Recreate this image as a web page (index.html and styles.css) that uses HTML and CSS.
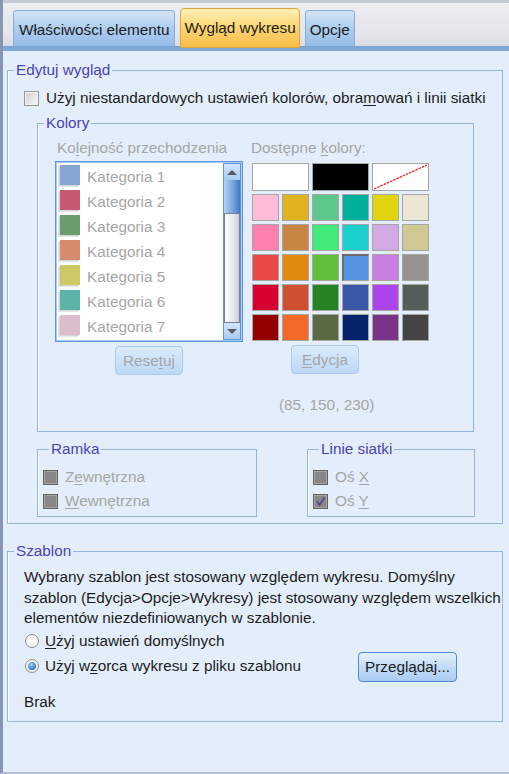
FILE: index.html
```html
<!DOCTYPE html>
<html lang="pl">
<head>
<meta charset="utf-8">
<title>Wygląd wykresu</title>
<link rel="stylesheet" href="styles.css">
</head>
<body>
<div class="window">
  <div class="tabbar">
    <div class="tab">Właściwości elementu</div>
    <div class="tab active">Wygląd wykresu</div>
    <div class="tab last">Opcje</div>
  </div>
  <div class="strip"></div>

  <fieldset class="group edit">
    <legend>Edytuj wygląd</legend>
    <div class="check-row main-check"><span class="cb"></span><span>Użyj niestandardowych ustawień kolorów, obra<u>m</u>owań i linii siatki</span></div>

    <fieldset class="group colors">
      <legend>Kolory</legend>
      <div class="colors-body">
        <div class="col-left">
          <div class="lbl">Ko<u>l</u>ejność przechodzenia</div>
          <div class="listbox">
            <div class="items">
              <div class="item"><span class="sw" style="background:#86a6d2"></span><span>Kategoria 1</span></div>
              <div class="item"><span class="sw" style="background:#c65a72"></span><span>Kategoria 2</span></div>
              <div class="item"><span class="sw" style="background:#6a9c6c"></span><span>Kategoria 3</span></div>
              <div class="item"><span class="sw" style="background:#d78a6c"></span><span>Kategoria 4</span></div>
              <div class="item"><span class="sw" style="background:#cfc866"></span><span>Kategoria 5</span></div>
              <div class="item"><span class="sw" style="background:#5cb4a8"></span><span>Kategoria 6</span></div>
              <div class="item"><span class="sw" style="background:#dbbccb"></span><span>Kategoria 7</span></div>
              <div class="item"><span class="sw" style="background:#c48ed6"></span><span>Kategoria 8</span></div>
            </div>
            <div class="scrollbar">
              <div class="sb-btn"><span class="arrow up"></span></div>
              <div class="sb-thumb"></div>
              <div class="sb-track"></div>
              <div class="sb-btn"><span class="arrow down"></span></div>
            </div>
          </div>
          <div class="btn disabled reset"><span>Rese<u>t</u>uj</span></div>
        </div>
        <div class="col-right">
          <div class="lbl">Dostępne <u>k</u>olory:</div>
          <div class="palette">
            <span class="cell wide" style="background:#ffffff"></span>
            <span class="cell wide" style="background:#000000"></span>
            <span class="cell wide none"><svg viewBox="0 0 55 26" preserveAspectRatio="none"><line x1="1" y1="25" x2="54" y2="1" stroke="#f01c1c" stroke-width="1.3" stroke-dasharray="2.5 1"/></svg></span>

            <span class="cell" style="background:#ffbcd9"></span>
            <span class="cell" style="background:#e0b420"></span>
            <span class="cell" style="background:#5ec88a"></span>
            <span class="cell" style="background:#00b09a"></span>
            <span class="cell" style="background:#e2d40e"></span>
            <span class="cell" style="background:#ece6d4"></span>

            <span class="cell" style="background:#ff7fae"></span>
            <span class="cell" style="background:#c98642"></span>
            <span class="cell" style="background:#41e87a"></span>
            <span class="cell" style="background:#1ccfcf"></span>
            <span class="cell" style="background:#d1a9e4"></span>
            <span class="cell" style="background:#d1c994"></span>

            <span class="cell" style="background:#e84a4a"></span>
            <span class="cell" style="background:#e08a10"></span>
            <span class="cell" style="background:#5ec03a"></span>
            <span class="cell selected" style="background:#5594e2"></span>
            <span class="cell" style="background:#c97fe2"></span>
            <span class="cell" style="background:#959290"></span>

            <span class="cell" style="background:#d60030"></span>
            <span class="cell" style="background:#cf5030"></span>
            <span class="cell" style="background:#258325"></span>
            <span class="cell" style="background:#3b58a8"></span>
            <span class="cell" style="background:#ad44ee"></span>
            <span class="cell" style="background:#555f5a"></span>

            <span class="cell" style="background:#930000"></span>
            <span class="cell" style="background:#f26a28"></span>
            <span class="cell" style="background:#5a6b44"></span>
            <span class="cell" style="background:#06246c"></span>
            <span class="cell" style="background:#79348a"></span>
            <span class="cell" style="background:#444444"></span>
          </div>
          <div class="btn disabled edit-btn"><span><u>E</u>dycja</span></div>
          <div class="rgb">(85, 150, 230)</div>
        </div>
      </div>
    </fieldset>

    <div class="subgroups">
      <fieldset class="group frame">
        <legend>Ramka</legend>
        <div class="check-row dis"><span class="cb disabled"></span><span>Z<u>e</u>wnętrzna</span></div>
        <div class="check-row dis"><span class="cb disabled"></span><span><u>W</u>ewnętrzna</span></div>
      </fieldset>
      <fieldset class="group gridlines">
        <legend>Linie siatki</legend>
        <div class="check-row dis"><span class="cb disabled"></span><span>Oś <u>X</u></span></div>
        <div class="check-row dis"><span class="cb disabled"><svg viewBox="0 0 15 15"><polyline points="3.5,7.5 6.5,11.5 12,3" fill="none" stroke="#4b4b8c" stroke-width="2"/></svg></span><span>Oś <u>Y</u></span></div>
      </fieldset>
    </div>
  </fieldset>

  <fieldset class="group template">
    <legend>Szablon</legend>
    <p class="desc">Wybrany szablon jest stosowany względem wykresu. Domyślny<br>szablon (Edycja&gt;Opcje&gt;Wykresy) jest stosowany względem wszelkich<br>elementów niezdefiniowanych w szablonie.</p>
    <div class="radios">
      <div class="radio-row"><span class="rb"></span><span><u>U</u>żyj ustawień domyślnych</span></div>
      <div class="radio-row"><span class="rb on"></span><span>Użyj w<u>z</u>orca wykresu z pliku szablonu</span><div class="btn browse"><span>Przeglądaj...</span></div></div>
    </div>
    <div class="brak">Brak</div>
  </fieldset>
</div>
</body>
</html>
```

FILE: styles.css
```css
* { box-sizing: border-box; }
html, body { margin: 0; padding: 0; }
body {
  background: #e3eefa;
  font-family: "Liberation Sans", Arial, sans-serif;
  font-size: 15.3px;
  color: #1c1c1c;
}
u { text-decoration: underline; text-underline-offset: 2px; }

.window {
  position: relative;
  width: 509px;
  height: 774px;
  background: #e3eefa;
  border-left: 3px solid #8796b3;
  border-bottom: 2px solid #b3c0d6;
  overflow: hidden;
}
.window::before {
  content: "";
  position: absolute;
  left: -3px;
  top: 378px;
  width: 3px;
  height: 20px;
  background: repeating-linear-gradient(#3f4f70 0 2px, #8796b3 2px 5px);
}

/* tabs */
.tabbar {
  height: 46px;
  display: flex;
  align-items: flex-end;
  gap: 4px;
  padding-left: 10px;
  background: linear-gradient(#c6c9d3 0, #c6c9d3 3px, #ececf1 3px, #e4e5eb 80%, #d9dae3 100%);
}
.tab {
  height: 36px;
  padding: 3px 5px 0;
  display: flex;
  align-items: center;
  border: 1px solid #86acd9;
  border-bottom: none;
  border-radius: 4px 4px 0 0;
  background: linear-gradient(#d3e4f6, #b4d1f1 40%, #95bce8);
  white-space: nowrap;
}
.tab.last { padding: 3px 4px 0; }
.tab.active {
  height: 40px;
  margin-left: 1px;
  margin-bottom: -2px;
  padding: 0 3px;
  margin-right: 1px;
  position: relative;
  z-index: 1;
  border: 1px solid #d9a640;
  background: linear-gradient(#fff0b5, #fdd877 45%, #f8bd48);
}
.strip { height: 5px; background: #7ba6d6; }

/* groups */
.group {
  margin: 0;
  padding: 0;
  border: 1px solid #94b5de;
  box-shadow: inset 1px 0 0 #fbfdff;
  min-width: 0;
}
.group > legend {
  margin-left: 6px;
  padding: 0 2px;
  line-height: 16px;
  color: #4a44b6;
}

.edit { margin: 11px 6px 0 4px; padding-bottom: 6px; }

.check-row { display: flex; align-items: center; gap: 7px; white-space: nowrap; }
.main-check { margin: 12px 0 0 16px; height: 16px; }
.cb {
  width: 15px;
  height: 15px;
  flex: none;
  border: 1px solid #979797;
  background: linear-gradient(135deg, #d2d2d2, #f6f6f6);
  box-shadow: inset 0 0 0 1px #f2f2f2;
}
.cb.disabled {
  border: 1px solid #636363;
  background: #878787;
  box-shadow: inset 0 0 0 1px #a5a5a5;
}
.cb svg { display: block; width: 13px; height: 13px; }

.colors { margin: 9px 0 0 29px; width: 437px; padding-bottom: 18px; }
.colors-body { display: flex; }
.lbl { margin-top: 9px; line-height: 16px; color: #a6a6a6; white-space: nowrap; }
.col-left { margin-left: 17px; width: 188px; display: flex; flex-direction: column; }
.col-left .lbl { padding-left: 2px; }
.col-right { margin-left: 8px; display: flex; flex-direction: column; align-items: flex-start; }

.listbox {
  margin-top: 5px;
  height: 181px;
  display: flex;
  border: 1px solid #5d98dc;
  box-shadow: inset 0 0 0 1px #a8cbf2;
  background: #fff;
  padding: 1px;
}
.items { flex: 1; overflow: hidden; }
.item {
  height: 25px;
  display: flex;
  align-items: flex-start;
  color: #a6a6a6;
  white-space: nowrap;
}
.sw {
  width: 20px;
  height: 20px;
  margin: 2px 7px 0 3px;
  flex: none;
  box-shadow: -1px 1px 0 #d6d6d6, -2px 2px 0 #e6e6e6;
}
.item span:last-child { line-height: 16px; padding-top: 6px; }

.scrollbar {
  width: 18px;
  display: flex;
  flex-direction: column;
  border: 1px solid #5d98dc;
  background: #bcd9f7;
}
.sb-btn {
  height: 16px;
  display: flex;
  align-items: center;
  justify-content: center;
  background: linear-gradient(#d2e6fa, #a9cdf3);
}
.arrow { width: 0; height: 0; border-left: 5px solid transparent; border-right: 5px solid transparent; }
.arrow.up { border-bottom: 5px solid #5a5a66; }
.arrow.down { border-top: 5px solid #5a5a66; }
.sb-thumb {
  height: 33px;
  background: linear-gradient(90deg, #b7d4f3, #6fa1dc 60%, #3e78c4);
}
.sb-track {
  flex: 1;
  border: 1px solid #7b7f94;
  background: linear-gradient(90deg, #ffffff, #e6e8f0 60%, #c9ccd8);
}

.btn {
  display: flex;
  align-items: center;
  justify-content: center;
  line-height: 18px;
  height: 29px;
  border-radius: 4px;
  white-space: nowrap;
}
.btn.disabled {
  width: 68px;
  margin-top: 4px;
  color: #a6a6a6;
  border: 1px solid #a9cbef;
  background: linear-gradient(#dcebfb, #bcd8f6);
}
.reset { align-self: center; }
.edit-btn { margin-left: 40px; }

.palette {
  margin-top: 7px;
  margin-left: 1px;
  display: grid;
  grid-template-columns: repeat(6, 27px);
  grid-template-rows: 28px repeat(5, 27px);
  gap: 3px;
}
.cell { display: block; border: 1px solid #a6a6a6; }
.cell.wide { grid-column: span 2; }
.cell.none { background: #fff; }
.cell.none svg { display: block; width: 100%; height: 100%; }
.cell.selected { border-top: 2px solid #6b6b6b; border-left: 2px solid #6b6b6b; }

.rgb { margin: 23px 0 0 28px; line-height: 16px; color: #a6a6a6; }

.subgroups { display: flex; margin-top: 9px; }
.frame { margin-left: 29px; width: 220px; padding: 8px 0 3px 5px; }
.gridlines { margin-left: 50px; width: 168px; padding: 8px 0 3px 5px; }
.check-row.dis { height: 24px; color: #a6a6a6; }

.template { margin: 19px 6px 0 4px; padding-bottom: 11px; }
.desc { margin: 8px 0 0 16px; line-height: 20.6px; white-space: nowrap; }
.radios { margin-top: 0; }
.radio-row {
  height: 25px;
  display: flex;
  align-items: center;
  gap: 6px;
  margin-left: 17px;
  white-space: nowrap;
}
.rb {
  width: 14px;
  height: 14px;
  flex: none;
  border-radius: 50%;
  border: 1px solid #8b8b8b;
  background: radial-gradient(circle at 50% 40%, #ffffff 40%, #dedede);
  display: flex;
  align-items: center;
  justify-content: center;
}
.rb.on::after {
  content: "";
  width: 8px;
  height: 8px;
  border-radius: 50%;
  background: radial-gradient(circle at 40% 35%, #a9cdf6, #2f6ec6 75%);
}
.browse {
  margin: 2px 45px 0 auto;
  width: 99px;
  height: 30px;
  flex: none;
  color: #1c1c1c;
  border: 1px solid #4f8ad2;
  background: linear-gradient(#e4f0fc, #c4dcf6 50%, #a9cbf1);
}
.brak { margin: 15px 0 0 16px; line-height: 16px; }
```
